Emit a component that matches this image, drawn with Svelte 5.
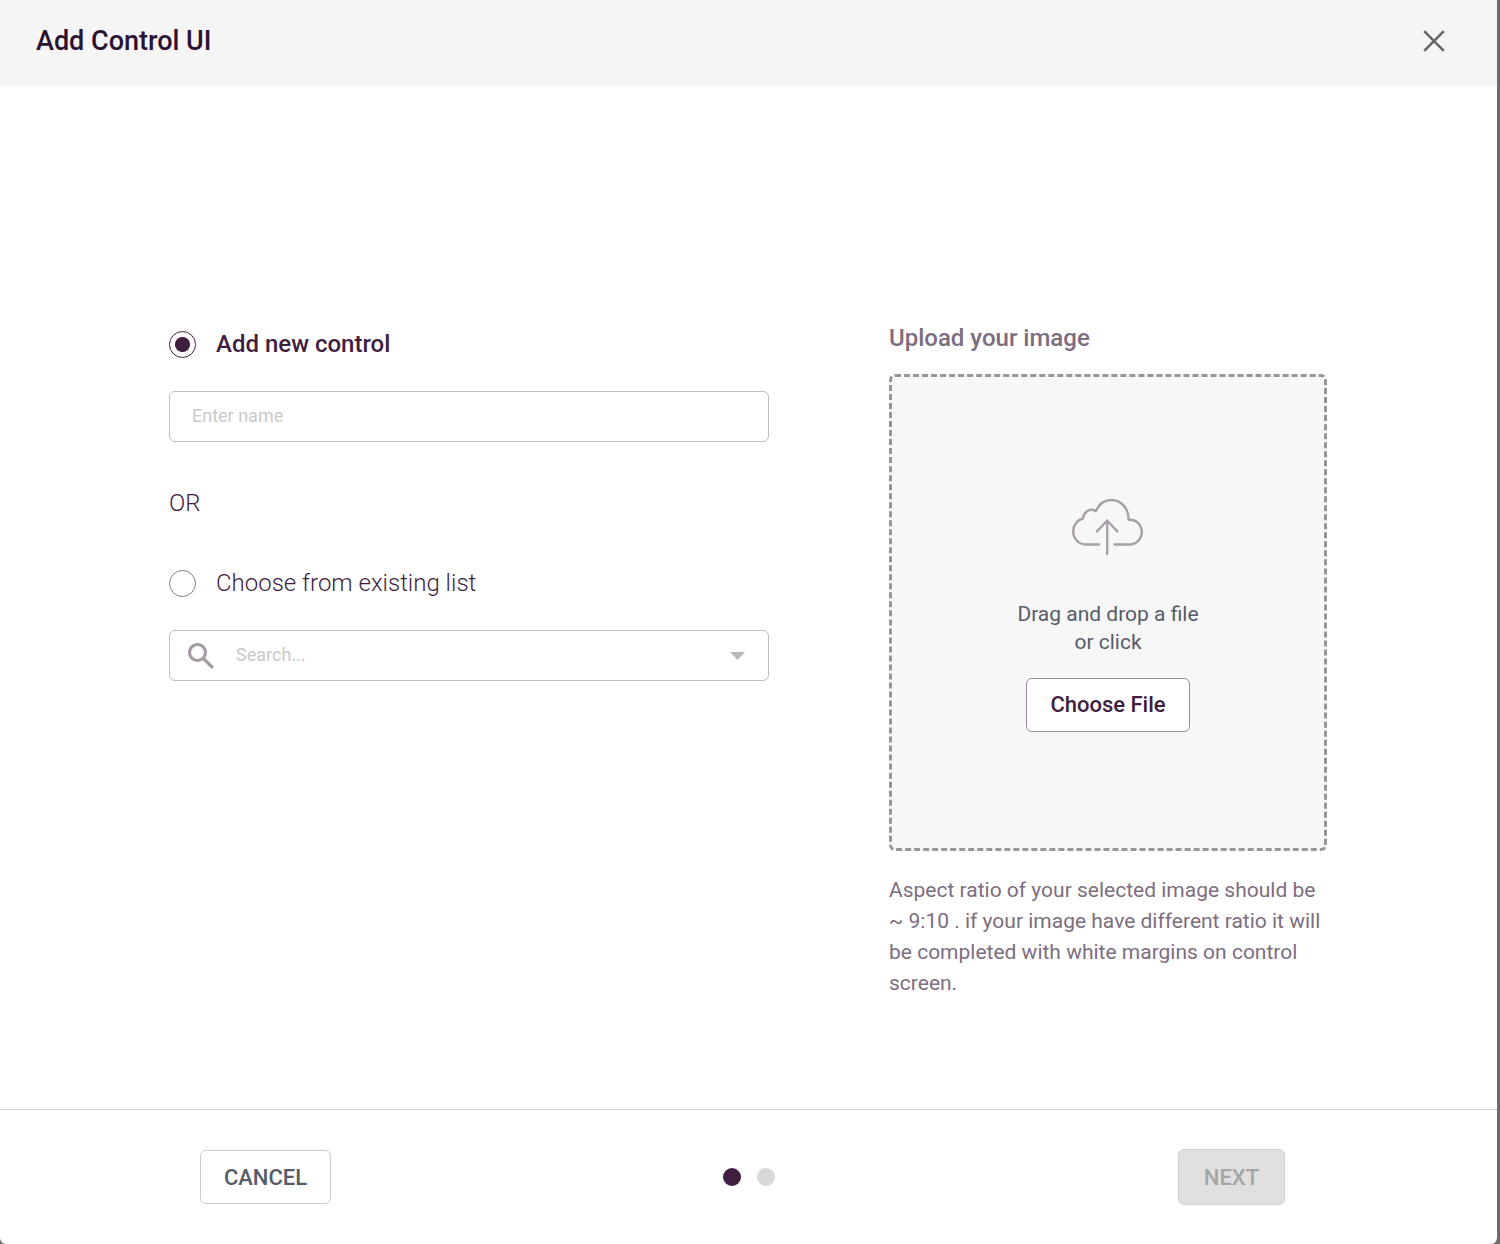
<script>
	let mode = $state('new');
	let name = $state('');
	let search = $state('');
	let step = $state(0);
	let fileInput;

	const steps = ['Control', 'Details'];
</script>

<main class="dialog">
	<header>
		<h1>Add Control UI</h1>
		<button class="close" type="button" aria-label="Close">
			<svg width="22" height="22" viewBox="0 0 22 22">
				<path d="M1.2 1.2l19.6 19.6M20.8 1.2L1.2 20.8" />
			</svg>
		</button>
	</header>

	<div class="content">
		<section class="options">
			<label class="option" class:selected={mode === 'new'}>
				<input type="radio" name="mode" value="new" bind:group={mode} />
				Add new control
			</label>
			<div class="field">
				<input type="text" placeholder="Enter name" aria-label="Name" bind:value={name} />
			</div>

			<p class="or">OR</p>

			<label class="option" class:selected={mode === 'existing'}>
				<input type="radio" name="mode" value="existing" bind:group={mode} />
				Choose from existing list
			</label>
			<div class="field search">
				<svg class="magnifier" width="26" height="26" viewBox="0 0 26 26">
					<circle cx="9.500" cy="9.500" r="8" />
					<path d="M15.500 15.500l9.300 9.300" />
				</svg>
				<input type="text" placeholder="Search..." aria-label="Search" bind:value={search} />
				<button class="toggle" type="button" aria-label="Show list">
					<svg width="15" height="8" viewBox="0 0 15 8"><path d="M0 0h15L7.500 8z" /></svg>
				</button>
			</div>
		</section>

		<section class="upload">
			<h2>Upload your image</h2>
			<div class="dropzone">
				<svg class="cloud" width="72" height="58" viewBox="0 0 72 58">
					<path d="M27 46.500H14C6.800 46.500 1.200 40.800 1.200 33.600c0-6.600 4.200-11.800 9.800-13.100C11.700 13.500 18.500 9.700 23.800 13.200 26.900 6.200 32.800 2 39.500 2c9.600 0 17.500 8.500 17 19.800C63.800 21 69.800 26.600 69.800 34c0 7-5.700 12.500-12.600 12.500H42.500" />
					<path d="M35.200 56V22.500M25 33.500l10.200-11 10.200 11" />
				</svg>
				<p>Drag and drop a file<br />or click</p>
				<button class="choose" type="button" onclick={() => fileInput.click()}>Choose File</button>
				<input type="file" accept="image/*" aria-label="Image file" hidden bind:this={fileInput} />
			</div>
			<p class="hint">
				Aspect ratio of your selected image should be ~ 9:10 . if your image have different ratio it will
				be completed with white margins on control screen.
			</p>
		</section>
	</div>

	<footer>
		<button class="cancel" type="button">CANCEL</button>
		<div class="dots">
			{#each steps as label, i}
				<span class="dot" class:active={i === step}></span>
			{/each}
		</div>
		<button class="next" type="button" disabled={!name} onclick={() => (step = 1)}>NEXT</button>
	</footer>
</main>

<style>
	:global(body) {
		background: #6b6b6b;
		font-family: Roboto, sans-serif;
	}

	h1, h2, p {
		margin: 0;
	}

	button, input {
		font-family: inherit;
		box-sizing: border-box;
	}

	button {
		cursor: pointer;
	}

	.dialog {
		display: flex;
		flex-direction: column;
		min-height: 100vh;
		margin-right: 3px;
		background: #fff;
		border-radius: 0 0 6px 6px;
		color: #401e40;
	}

	header {
		display: flex;
		align-items: center;
		justify-content: space-between;
		padding: 20px 48px 24px 36px;
		background: #f5f5f5;
	}

	h1 {
		color: #2b1230;
		font-size: 27px;
		font-weight: 500;
		line-height: 42px;
	}

	.close {
		display: flex;
		padding: 4px;
		border: 0;
		background: none;
	}

	.close path {
		fill: none;
		stroke: #666;
		stroke-width: 2.6;
	}

	.content {
		flex: 1;
		display: grid;
		grid-template-columns: minmax(0, 1fr) 438px;
		gap: 120px;
		align-items: start;
		padding: 236px 170px 80px 169px;
	}

	.option {
		display: flex;
		align-items: center;
		gap: 20px;
		padding-top: 6px;
		font-size: 24px;
		font-weight: 300;
		line-height: 32px;
	}

	.option.selected {
		font-weight: 500;
	}

	.option input {
		appearance: none;
		width: 27px;
		height: 27px;
		margin: 0;
		border: 1px solid #8b7a8b;
		border-radius: 50%;
	}

	.option input:checked {
		border-color: #401e40;
		background: radial-gradient(circle, #401e40 7px, transparent 8px);
	}

	.field {
		display: flex;
		align-items: center;
		height: 51px;
		margin-top: 31px;
		box-sizing: border-box;
		border: 1px solid #bdbdbd;
		border-radius: 6px;
		background: #fff;
	}

	.field input {
		flex: 1;
		min-width: 0;
		height: 100%;
		padding: 0 22px 2px;
		border: 0;
		outline: 0;
		background: none;
		color: #401e40;
		font-size: 18px;
	}

	.field input::placeholder {
		color: #c9c9c9;
		opacity: 1;
	}

	.search {
		padding: 0 18px;
	}

	.magnifier {
		fill: none;
		stroke: #a59ca5;
		stroke-width: 3.2;
	}

	.toggle {
		display: flex;
		padding: 5px;
		border: 0;
		background: none;
		fill: #b9b9b9;
	}

	.or {
		padding: 45px 0 42px;
		font-size: 24px;
		font-weight: 300;
		line-height: 32px;
	}

	h2 {
		color: #7d6d80;
		font-size: 24px;
		font-weight: 500;
		line-height: 32px;
	}

	.dropzone {
		display: flex;
		flex-direction: column;
		align-items: center;
		justify-content: center;
		height: 477px;
		margin-top: 20px;
		padding-top: 4px;
		box-sizing: border-box;
		border: 3px dashed #979797;
		border-radius: 6px;
		background: #f7f7f7;
	}

	.dropzone p {
		margin: 44px 0 22px;
		color: #565c68;
		font-size: 21px;
		line-height: 28px;
		text-align: center;
	}

	.cloud {
		fill: none;
		stroke: #a8a0a8;
		stroke-width: 2.4;
		stroke-linecap: round;
		stroke-linejoin: round;
	}

	.choose, .cancel, .next {
		height: 54px;
		padding: 0 23px;
		border: 1px solid #ccc;
		border-radius: 6px;
		background: #fff;
		font-size: 22px;
		font-weight: 500;
	}

	.choose {
		border-color: #9a879c;
		color: #401e40;
	}

	.hint {
		margin-top: 24px;
		color: #7d6d80;
		font-size: 21px;
		line-height: 31px;
	}

	footer {
		display: grid;
		grid-template-columns: repeat(3, 1fr);
		align-items: center;
		justify-items: center;
		padding: 39px 24px;
		border-top: 1px solid #d0d0d0;
	}

	.cancel {
		color: #565c68;
	}

	.next {
		height: 56px;
		padding: 0 25px;
		border-color: #d0d0d0;
		background: #e0e0e0;
		color: #a6a6a6;
	}

	.dots {
		display: flex;
		gap: 16px;
	}

	.dot {
		width: 18px;
		height: 18px;
		border-radius: 50%;
		background: #d8d8d8;
	}

	.dot.active {
		background: #401e40;
	}
</style>
